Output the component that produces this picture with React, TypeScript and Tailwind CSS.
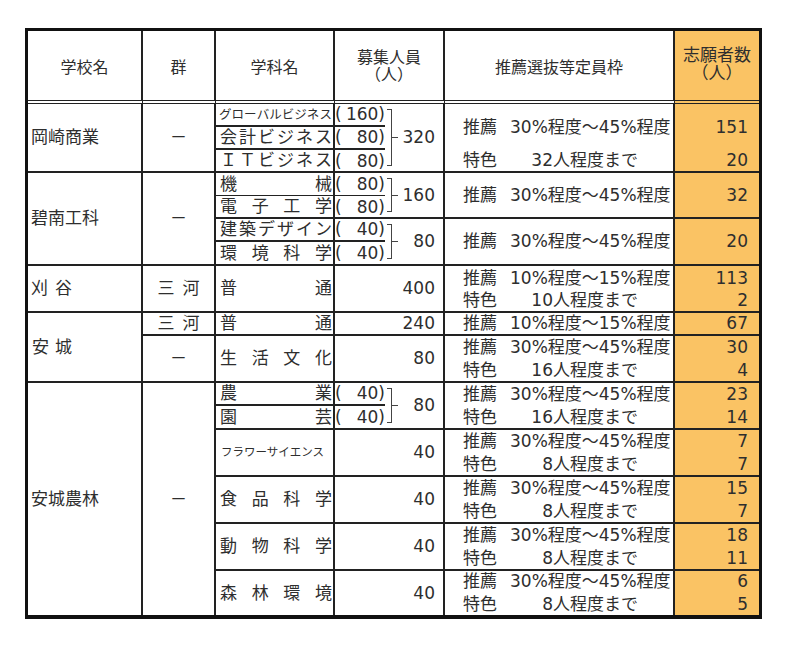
import React from 'react';

const Spread = ({ text, className = '' }: { text: string; className?: string }) => (
  <div className={`flex w-full justify-between ${className}`}>
    {Array.from(text).map((ch, i) => (
      <span key={i}>{ch}</span>
    ))}
  </div>
);

const Paren = ({ n, className = '' }: { n: string; className?: string }) => (
  <div className={`flex items-center border-[#222] ${className}`}>
    <span>(</span>
    <span className="flex-1 text-right">{n}</span>
    <span>)</span>
  </div>
);

const Group = ({ className, total, children }: { className: string; total: string; children: React.ReactNode }) => (
  <div className={`flex border-r-2 border-b-2 border-[#222] ${className}`}>
    <div className="flex w-[50px] flex-col">{children}</div>
    <div className="flex items-center">
      <div className="my-[5px] ml-[2px] w-[5px] self-stretch border-y border-r border-[#444]" />
      <div className="h-px w-[6px] bg-[#444]" />
    </div>
    <div className="flex flex-1 items-center justify-end pr-[8px]">{total}</div>
  </div>
);

const Suisen = ({ r }: { r: string }) => (
  <div className="flex">
    <span className="w-[47px]">推薦</span>
    <span>{r}</span>
  </div>
);

const Tokushoku = ({ n }: { n: string }) => (
  <div className="flex">
    <span className="w-[47px]">特色</span>
    <span className="w-[43px] text-right">{n}</span>
    <span>人程度まで</span>
  </div>
);

const R30 = '30%程度～45%程度';
const R10 = '10%程度～15%程度';

export default function App() {
  return (
    <div className="min-h-screen bg-white pl-[25px] pt-[28px] font-['DejaVu_Sans','Noto_Sans_CJK_JP',sans-serif] text-[17px] leading-[23px] text-[#2e2e2e]">
      <div className="grid w-fit grid-cols-[115px_73px_119px_110px_230px_84px] grid-rows-[73px_23px_23px_23px_23px_23px_23px_24px_47px_23px_47px_23px_24px_47px_47px_47px_44px] border-[3px] border-b-4 border-[#111]">
        {/* Header */}
        <div className="col-start-1 row-start-1 flex items-center justify-center border-r-2 border-b-4 border-[#222] pt-[4px] text-[16px] [border-bottom-style:double]">学校名</div>
        <div className="col-start-2 row-start-1 flex items-center justify-center border-r-2 border-b-4 border-[#222] pt-[4px] text-[16px] [border-bottom-style:double]">群</div>
        <div className="col-start-3 row-start-1 flex items-center justify-center border-r-2 border-b-4 border-[#222] pt-[4px] text-[16px] [border-bottom-style:double]">学科名</div>
        <div className="col-start-4 row-start-1 flex flex-col items-center justify-center border-r-2 border-b-4 border-[#222] text-[16px] leading-[17px] [border-bottom-style:double]">
          <span>募集人員</span>
          <span>（人）</span>
        </div>
        <div className="col-start-5 row-start-1 flex items-center justify-center border-r-2 border-b-4 border-[#222] pt-[4px] text-[16px] [border-bottom-style:double]">推薦選抜等定員枠</div>
        <div className="col-start-6 row-start-1 flex flex-col items-center justify-center border-b-4 border-[#222] bg-[#fac364] pb-[4px] text-[17px] leading-[18px] [border-bottom-style:double]">
          <span>志願者数</span>
          <span>（人）</span>
        </div>

        {/* 学校名 */}
        <div className="col-start-1 row-start-2 row-span-3 flex items-center border-r-2 border-b-2 border-[#222] pl-[3px]">岡崎商業</div>
        <div className="col-start-1 row-start-5 row-span-4 flex items-center border-r-2 border-b-2 border-[#222] pl-[3px]">碧南工科</div>
        <div className="col-start-1 row-start-9 flex items-center gap-[7px] border-r-2 border-b-2 border-[#222] pl-[3px]">
          <span>刈</span>
          <span>谷</span>
        </div>
        <div className="col-start-1 row-start-10 row-span-2 flex items-center gap-[6px] border-r-2 border-b-2 border-[#222] pl-[4px]">
          <span>安</span>
          <span>城</span>
        </div>
        <div className="col-start-1 row-start-12 row-span-6 flex items-center border-r-2 border-[#222] pl-[3px]">安城農林</div>

        {/* 群 */}
        <div className="col-start-2 row-start-2 row-span-3 flex items-center justify-center border-r-2 border-b-2 border-[#222]">－</div>
        <div className="col-start-2 row-start-5 row-span-4 flex items-center justify-center border-r-2 border-b-2 border-[#222]">－</div>
        <div className="col-start-2 row-start-9 flex items-center justify-center gap-[8px] border-r-2 border-b-2 border-[#222]">
          <span>三</span>
          <span>河</span>
        </div>
        <div className="col-start-2 row-start-10 flex items-center justify-center gap-[8px] border-r-2 border-b-2 border-[#222]">
          <span>三</span>
          <span>河</span>
        </div>
        <div className="col-start-2 row-start-11 flex items-center justify-center border-r-2 border-b-2 border-[#222]">－</div>
        <div className="col-start-2 row-start-12 row-span-6 flex items-center justify-center border-r-2 border-[#222]">－</div>

        {/* 学科名 */}
        <div className="col-start-3 row-start-2 flex items-center border-r-2 border-b-2 border-[#222] pl-[3px] pr-[1px] text-[12.5px]">
          <Spread text="グローバルビジネス" />
        </div>
        <div className="col-start-3 row-start-3 flex items-center border-r-2 border-b-2 border-[#222] pl-[4px] pr-[1px]">
          <Spread text="会計ビジネス" />
        </div>
        <div className="col-start-3 row-start-4 flex items-center border-r-2 border-b-2 border-[#222] pl-[4px] pr-[1px]">
          <Spread text="ＩＴビジネス" />
        </div>
        <div className="col-start-3 row-start-5 flex items-center border-r-2 border-b border-[#222] pl-[4px] pr-[1px]">
          <Spread text="機械" />
        </div>
        <div className="col-start-3 row-start-6 flex items-center border-r-2 border-b-2 border-[#222] pl-[4px] pr-[1px]">
          <Spread text="電子工学" />
        </div>
        <div className="col-start-3 row-start-7 flex items-center border-r-2 border-b-2 border-[#222] pl-[4px] pr-[1px]">
          <Spread text="建築デザイン" />
        </div>
        <div className="col-start-3 row-start-8 flex items-center border-r-2 border-b-2 border-[#222] pl-[4px] pr-[1px]">
          <Spread text="環境科学" />
        </div>
        <div className="col-start-3 row-start-9 flex items-center border-r-2 border-b-2 border-[#222] pl-[4px] pr-[1px]">
          <Spread text="普通" />
        </div>
        <div className="col-start-3 row-start-10 flex items-center border-r-2 border-b-2 border-[#222] pl-[4px] pr-[1px]">
          <Spread text="普通" />
        </div>
        <div className="col-start-3 row-start-11 flex items-center border-r-2 border-b-2 border-[#222] pl-[4px] pr-[1px]">
          <Spread text="生活文化" />
        </div>
        <div className="col-start-3 row-start-12 flex items-center border-r-2 border-b-2 border-[#222] pl-[4px] pr-[1px]">
          <Spread text="農業" />
        </div>
        <div className="col-start-3 row-start-13 flex items-center border-r-2 border-b-2 border-[#222] pl-[4px] pr-[1px]">
          <Spread text="園芸" />
        </div>
        <div className="col-start-3 row-start-14 flex items-center border-r-2 border-b-2 border-[#222] pl-[5px] text-[11.5px]">
          フラワーサイエンス
        </div>
        <div className="col-start-3 row-start-15 flex items-center border-r-2 border-b-2 border-[#222] pl-[4px] pr-[1px]">
          <Spread text="食品科学" />
        </div>
        <div className="col-start-3 row-start-16 flex items-center border-r-2 border-b-2 border-[#222] pl-[4px] pr-[1px]">
          <Spread text="動物科学" />
        </div>
        <div className="col-start-3 row-start-17 flex items-center border-r-2 border-[#222] pl-[4px] pr-[1px]">
          <Spread text="森林環境" />
        </div>

        {/* 募集人員 */}
        <Group className="col-start-4 row-start-2 row-span-3" total="320">
          <Paren n="160" className="h-[23px] border-b-2" />
          <Paren n="80" className="h-[23px] border-b-2" />
          <Paren n="80" className="flex-1" />
        </Group>
        <Group className="col-start-4 row-start-5 row-span-2" total="160">
          <Paren n="80" className="h-[23px] border-b" />
          <Paren n="80" className="flex-1" />
        </Group>
        <Group className="col-start-4 row-start-7 row-span-2" total="80">
          <Paren n="40" className="h-[23px] border-b-2" />
          <Paren n="40" className="flex-1" />
        </Group>
        <div className="col-start-4 row-start-9 flex items-center justify-end border-r-2 border-b-2 border-[#222] pr-[8px]">400</div>
        <div className="col-start-4 row-start-10 flex items-center justify-end border-r-2 border-b-2 border-[#222] pr-[8px]">240</div>
        <div className="col-start-4 row-start-11 flex items-center justify-end border-r-2 border-b-2 border-[#222] pr-[8px]">80</div>
        <Group className="col-start-4 row-start-12 row-span-2" total="80">
          <Paren n="40" className="h-[23px] border-b-2" />
          <Paren n="40" className="flex-1" />
        </Group>
        <div className="col-start-4 row-start-14 flex items-center justify-end border-r-2 border-b-2 border-[#222] pr-[8px]">40</div>
        <div className="col-start-4 row-start-15 flex items-center justify-end border-r-2 border-b-2 border-[#222] pr-[8px]">40</div>
        <div className="col-start-4 row-start-16 flex items-center justify-end border-r-2 border-b-2 border-[#222] pr-[8px]">40</div>
        <div className="col-start-4 row-start-17 flex items-center justify-end border-r-2 border-[#222] pr-[8px]">40</div>

        {/* 推薦選抜等定員枠 */}
        <div className="col-start-5 row-start-2 row-span-2 flex flex-col justify-center border-r-2 border-[#222] pl-[18px]">
          <Suisen r={R30} />
        </div>
        <div className="col-start-5 row-start-4 flex flex-col justify-center border-r-2 border-b-2 border-[#222] pl-[18px]">
          <Tokushoku n="32" />
        </div>
        <div className="col-start-5 row-start-5 row-span-2 flex flex-col justify-center border-r-2 border-b-2 border-[#222] pl-[18px]">
          <Suisen r={R30} />
        </div>
        <div className="col-start-5 row-start-7 row-span-2 flex flex-col justify-center border-r-2 border-b-2 border-[#222] pl-[18px]">
          <Suisen r={R30} />
        </div>
        <div className="col-start-5 row-start-9 flex flex-col justify-center border-r-2 border-b-2 border-[#222] pl-[18px] leading-[22px]">
          <Suisen r={R10} />
          <Tokushoku n="10" />
        </div>
        <div className="col-start-5 row-start-10 flex flex-col justify-center border-r-2 border-b-2 border-[#222] pl-[18px]">
          <Suisen r={R10} />
        </div>
        <div className="col-start-5 row-start-11 flex flex-col justify-center border-r-2 border-b-2 border-[#222] pl-[18px]">
          <Suisen r={R30} />
          <Tokushoku n="16" />
        </div>
        <div className="col-start-5 row-start-12 row-span-2 flex flex-col justify-center border-r-2 border-b-2 border-[#222] pl-[18px]">
          <Suisen r={R30} />
          <Tokushoku n="16" />
        </div>
        <div className="col-start-5 row-start-14 flex flex-col justify-center border-r-2 border-b-2 border-[#222] pl-[18px]">
          <Suisen r={R30} />
          <Tokushoku n="8" />
        </div>
        <div className="col-start-5 row-start-15 flex flex-col justify-center border-r-2 border-b-2 border-[#222] pl-[18px]">
          <Suisen r={R30} />
          <Tokushoku n="8" />
        </div>
        <div className="col-start-5 row-start-16 flex flex-col justify-center border-r-2 border-b-2 border-[#222] pl-[18px]">
          <Suisen r={R30} />
          <Tokushoku n="8" />
        </div>
        <div className="col-start-5 row-start-17 flex flex-col justify-center border-r-2 border-[#222] pl-[18px]">
          <Suisen r={R30} />
          <Tokushoku n="8" />
        </div>

        {/* 志願者数 */}
        <div className="col-start-6 row-start-2 row-span-2 flex flex-col items-end justify-center bg-[#fac364] pr-[11px]">151</div>
        <div className="col-start-6 row-start-4 flex flex-col items-end justify-center border-b-2 border-[#222] bg-[#fac364] pr-[11px]">20</div>
        <div className="col-start-6 row-start-5 row-span-2 flex flex-col items-end justify-center border-b-2 border-[#222] bg-[#fac364] pr-[11px]">32</div>
        <div className="col-start-6 row-start-7 row-span-2 flex flex-col items-end justify-center border-b-2 border-[#222] bg-[#fac364] pr-[11px]">20</div>
        <div className="col-start-6 row-start-9 flex flex-col items-end justify-center border-b-2 border-[#222] bg-[#fac364] pr-[11px] leading-[22px]">
          <span>113</span>
          <span>2</span>
        </div>
        <div className="col-start-6 row-start-10 flex flex-col items-end justify-center border-b-2 border-[#222] bg-[#fac364] pr-[11px]">67</div>
        <div className="col-start-6 row-start-11 flex flex-col items-end justify-center border-b-2 border-[#222] bg-[#fac364] pr-[11px]">
          <span>30</span>
          <span>4</span>
        </div>
        <div className="col-start-6 row-start-12 row-span-2 flex flex-col items-end justify-center border-b-2 border-[#222] bg-[#fac364] pr-[11px]">
          <span>23</span>
          <span>14</span>
        </div>
        <div className="col-start-6 row-start-14 flex flex-col items-end justify-center border-b-2 border-[#222] bg-[#fac364] pr-[11px]">
          <span>7</span>
          <span>7</span>
        </div>
        <div className="col-start-6 row-start-15 flex flex-col items-end justify-center border-b-2 border-[#222] bg-[#fac364] pr-[11px]">
          <span>15</span>
          <span>7</span>
        </div>
        <div className="col-start-6 row-start-16 flex flex-col items-end justify-center border-b-2 border-[#222] bg-[#fac364] pr-[11px]">
          <span>18</span>
          <span>11</span>
        </div>
        <div className="col-start-6 row-start-17 flex flex-col items-end justify-center bg-[#fac364] pr-[11px]">
          <span>6</span>
          <span>5</span>
        </div>
      </div>
    </div>
  );
}
